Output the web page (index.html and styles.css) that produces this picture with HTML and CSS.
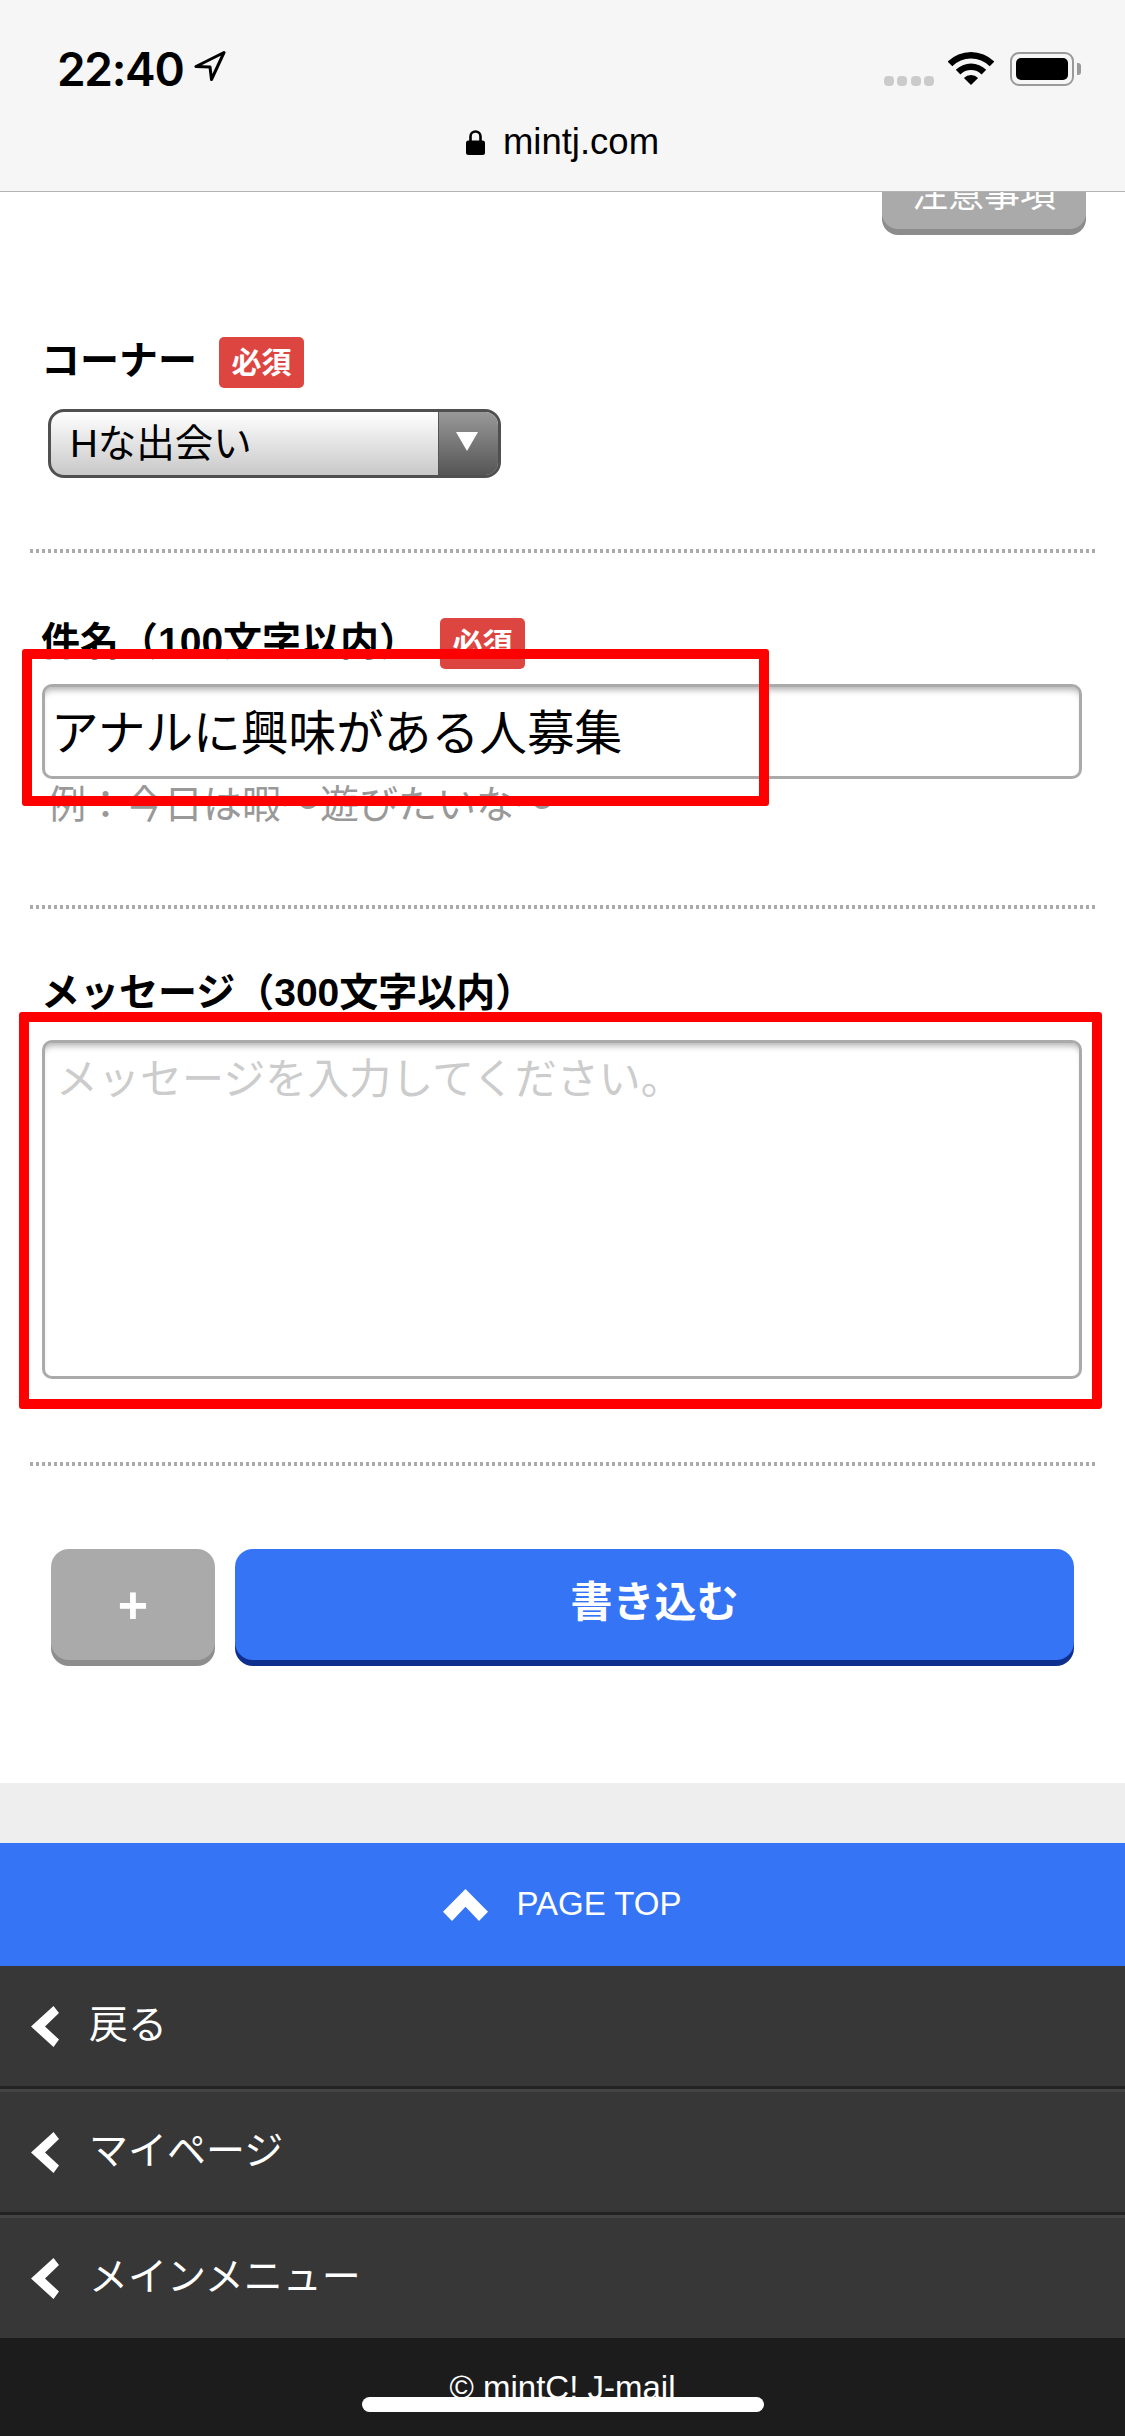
FILE: index.html
```html
<!DOCTYPE html>
<html lang="ja">
<head>
<meta charset="utf-8">
<title>mintj.com</title>
<link rel="stylesheet" href="styles.css">
</head>
<body>
<div class="page">
  <header class="browser">
    <div class="status">
      <div class="status-left">
        <span class="time">22:40</span>
        <svg class="loc" viewBox="0 0 32 30"><path d="M30 1.5 2 15.5l14 .5 1.5 12.5z" fill="none" stroke="#000" stroke-width="3" stroke-linejoin="round"/></svg>
      </div>
      <div class="status-right">
        <div class="signal"><i></i><i></i><i></i><i></i></div>
        <svg class="wifi" viewBox="0 0 46 33"><path d="M-.3 9.67A33 33 0 0 1 46.3 9.67L41.7 14.3A26.5 26.5 0 0 0 4.3 14.3Z"/><path d="M7.8 17.8A21.5 21.5 0 0 1 38.2 17.8L33.6 22.4A15 15 0 0 0 12.4 22.4Z"/><path d="M15.9 25.9A10 10 0 0 1 30.1 25.9L23 33Z"/></svg>
        <div class="battery"><div class="battery-level"></div></div>
        <div class="battery-nub"></div>
      </div>
    </div>
    <div class="url">
      <svg class="lock" viewBox="0 0 19 25"><path d="M4.5 12V6.5a5 5 0 0 1 10 0V12" fill="none" stroke="#000" stroke-width="2.6"/><rect x="0" y="10.5" width="19" height="14.5" rx="2.5"/></svg>
      <span>mintj.com</span>
    </div>
  </header>

  <main class="form">
    <div class="note-row"><button class="btn btn-note" type="button">注意事項</button></div>

    <section class="field field-corner">
      <div class="label-row">
        <span class="label">コーナー</span>
        <span class="badge">必須</span>
      </div>
      <div class="select">
        <span class="select-value">Hな出会い</span>
        <span class="select-arrow"><svg viewBox="0 0 22 19" class="tri"><path d="M0 0h22L11 19z" fill="#fff"/></svg></span>
      </div>
    </section>
    <div class="divider divider-1"></div>

    <section class="field field-subject">
      <div class="label-row">
        <span class="label">件名（100文字以内）</span>
        <span class="badge">必須</span>
      </div>
      <input class="text-input" type="text" value="アナルに興味がある人募集">
      <p class="hint">例：今日は暇〜遊びたいな〜</p>
    </section>
    <div class="divider divider-2"></div>

    <section class="field field-message">
      <div class="label-row">
        <span class="label">メッセージ（300文字以内）</span>
      </div>
      <textarea class="text-area" placeholder="メッセージを入力してください。"></textarea>
    </section>
    <div class="divider divider-3"></div>

    <div class="actions">
      <button class="btn btn-plus" type="button">+</button>
      <button class="btn btn-submit" type="button">書き込む</button>
    </div>
  </main>

  <div class="band"></div>
  <a class="pagetop">
    <svg class="chev-up" viewBox="0 0 45 32"><path d="M22.5 0 45 22.7 36 32 22.5 17.7 9 32 0 22.7z" fill="#fff"/></svg>
    <span class="pagetop-text">PAGE TOP</span>
  </a>
  <nav class="nav">
    <a class="nav-item"><svg class="chev" viewBox="0 0 28 41"><path d="M22.5 0 28 7 14 20.5 28 33.5 22.5 41 0 20.5z" fill="#fff"/></svg><span class="nav-text">戻る</span></a>
    <a class="nav-item"><svg class="chev" viewBox="0 0 28 41"><path d="M22.5 0 28 7 14 20.5 28 33.5 22.5 41 0 20.5z" fill="#fff"/></svg><span class="nav-text">マイページ</span></a>
    <a class="nav-item"><svg class="chev" viewBox="0 0 28 41"><path d="M22.5 0 28 7 14 20.5 28 33.5 22.5 41 0 20.5z" fill="#fff"/></svg><span class="nav-text">メインメニュー</span></a>
  </nav>
  <footer class="footer">© mintC! J-mail</footer>

  <div class="mark mark-subject"></div>
  <div class="mark mark-message"></div>
  <div class="home-bar"></div>
</div>
</body>
</html>
```
FILE: styles.css
```css
* { box-sizing: border-box; }
html, body { margin: 0; padding: 0; background: #fff; }
body { font-family: "Liberation Sans", "Noto Sans CJK JP", sans-serif; color: #000; }
.page { position: relative; width: 1125px; height: 2436px; overflow: hidden; background: #fff; }

/* browser chrome */
.browser { position: relative; z-index: 2; height: 192px; background: #f6f6f6; border-bottom: 1px solid #b4b4b4; }
.status { display: flex; justify-content: space-between; align-items: flex-start; height: 122px; padding: 52px 44px 0 57px; }
.status-left { display: flex; align-items: flex-start; gap: 11px; }
.time { font-family: Inter, sans-serif; font-weight: 600; font-size: 46px; line-height: 35px; letter-spacing: -1.3px; }
.loc { width: 32px; height: 30px; margin-top: -1px; }
.status-right { display: flex; align-items: flex-start; }
.signal { display: flex; gap: 3.5px; margin-top: 24px; margin-right: 14px; }
.signal i { display: block; width: 10px; height: 10px; border-radius: 4px; background: #cbcbcb; }
.wifi { width: 46px; height: 33px; margin-right: 16px; }
.battery { width: 64px; height: 34px; padding: 4px; border: 2px solid #999; border-radius: 9px; }
.battery-level { width: 100%; height: 100%; border-radius: 5px; background: #000; }
.battery-nub { width: 4px; height: 12px; margin: 11px 0 0 3px; border-radius: 0 3px 3px 0; background: #999; }
.url { display: flex; justify-content: center; align-items: center; gap: 18px; height: 48px; font-size: 36.5px; line-height: 48px; margin-top: -4px; }
.lock { width: 19px; height: 25px; }

/* form */
.form { padding: 0 30px; }
.note-row { display: flex; justify-content: flex-end; margin-top: -31px; padding-right: 9px; }
.btn { display: block; border: 0; padding: 0; color: #fff; font-family: inherit; }
.btn-note { width: 204px; height: 68px; border-radius: 16px; background: #aaa; box-shadow: 0 6px 0 #8c8c8c; font-size: 36px; line-height: 68px; }
.field-corner { margin-top: 108px; }
.label-row { display: flex; align-items: center; padding-left: 11px; height: 51px; }
.label { font-size: 39px; font-weight: 700; line-height: 47px; padding-bottom: 4px; white-space: nowrap; }
.badge { display: block; width: 85px; height: 51px; margin-left: 22px; border-radius: 5px; background: #dd4540; color: #fff; font-size: 30px; font-weight: 700; line-height: 51px; text-align: center; }

.select { display: flex; width: 453px; height: 69px; margin: 21px 0 0 18px; border: 3px solid #505050; border-radius: 16px; overflow: hidden; background: linear-gradient(#fff, #c8c8c8); }
.select-value { flex: 1; padding-left: 19px; font-size: 38.5px; line-height: 63px; }
.select-arrow { display: flex; justify-content: center; align-items: center; width: 60px; padding-bottom: 4px; padding-right: 4px; border-left: 1px solid #555; background: linear-gradient(#999, #555); }
.tri { width: 22px; height: 19px; }

.divider { height: 4px; background: repeating-linear-gradient(90deg, #aaa 0 3px, transparent 3px 6px); }
.divider-1 { margin-top: 71px; }
.field-subject { margin-top: 65px; }
.text-input, .text-area { display: block; width: 1040px; margin-left: 12px; border: 3px solid #aaa; border-radius: 10px; background: #fff; box-shadow: inset 0 7px 6px -4px rgba(0, 0, 0, .3); outline: 0; font-family: inherit; color: #000; }
.text-input { height: 95px; margin-top: 15px; padding: 0 6px 5px; font-size: 47.7px; }
.hint { margin: 4px 0 0 17px; padding-bottom: 3px; color: #999; font-size: 39px; line-height: 44px; }
.divider-2 { margin-top: 75px; }
.field-message { margin-top: 60px; }
.text-area { height: 339px; margin-top: 20px; padding: 13px 11px; font-size: 42px; line-height: 48px; resize: none; }
.text-area::placeholder { color: #ccc; opacity: 1; }
.divider-3 { margin-top: 83px; }
.actions { display: flex; gap: 20px; margin-top: 83px; padding-left: 21px; }
.btn-plus { width: 164px; height: 111px; border-radius: 18px; background: #aaa; box-shadow: 0 6px 0 #8d8d8d; font-size: 52px; font-weight: 700; line-height: 108px; }
.btn-submit { width: 839px; height: 111px; border-radius: 18px; background: #3575f5; box-shadow: 0 6px 0 #0f2f90; font-size: 42px; font-weight: 700; line-height: 104px; padding-bottom: 3px; }

/* footer area */
.band { height: 60px; margin-top: 123px; background: #eee; }
.pagetop { display: flex; justify-content: center; align-items: center; gap: 28px; height: 123px; background: #3575f5; color: #fff; font-size: 33px; }
.pagetop-text { padding-bottom: 2px; }
.chev-up { width: 45px; height: 32px; }
.nav { background: #373737; }
.nav-item { display: flex; align-items: center; gap: 31px; height: 126px; padding-left: 31px; border-top: 3px solid #444; border-bottom: 3px solid #222; color: #fff; font-size: 39px; }
.nav-item:first-child { height: 123px; border-top: 0; }
.nav-item:last-child { height: 123px; border-bottom: 0; }
.nav-text { padding-bottom: 10px; margin-left: -1px; }
.chev { width: 28px; height: 41px; }
.footer { height: 98px; padding-top: 26px; background: #1c1c1c; color: #fff; font-size: 33px; line-height: 48px; text-align: center; }

/* overlays */
.mark { position: absolute; border: 10px solid #f00; border-radius: 3px; }
.mark-subject { left: 22px; top: 649px; width: 747px; height: 157px; }
.mark-message { left: 19px; top: 1012px; width: 1083px; height: 397px; }
.home-bar { position: absolute; left: 362px; top: 2397px; width: 402px; height: 15px; border-radius: 8px; background: #fff; }
```
